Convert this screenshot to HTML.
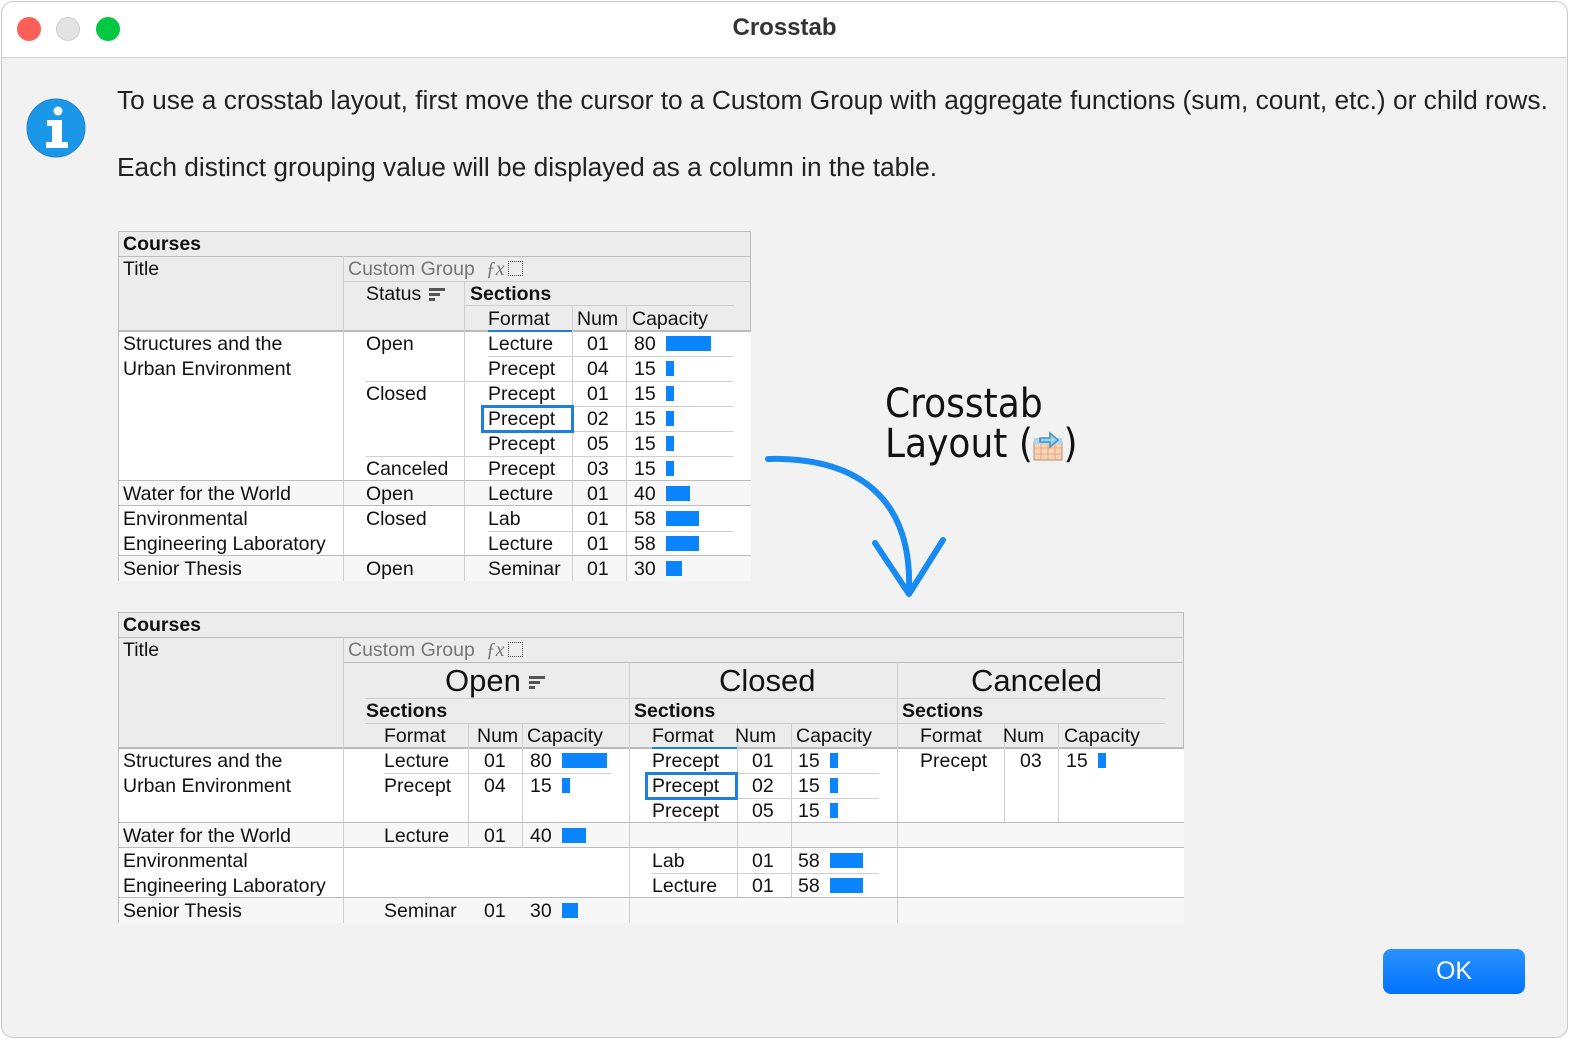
<!DOCTYPE html>
<html><head><meta charset="utf-8">
<style>
html,body{margin:0;padding:0;width:1584px;height:1048px;background:#fff;overflow:hidden}
#win{position:absolute;left:1px;top:1px;width:1565px;height:1035px;border:1px solid #c9c9c9;border-radius:12px;background:#f2f2f2;overflow:hidden}
#bar{position:absolute;left:0;top:0;width:100%;height:55px;background:#fff;border-bottom:1px solid #d4d4d4}
.dot{position:absolute;top:15px;width:24px;height:24px;border-radius:50%}
.a{position:absolute;white-space:nowrap}
.t{position:absolute;white-space:nowrap;font:19.5px/25px "Liberation Sans",sans-serif;color:#111;transform-origin:0 0;transform:translateY(1px)}
.b{font-weight:bold}
.g{color:#777}
.bx{position:absolute}
</style></head><body>
<div id="win">
<div id="bar">
<div class="dot" style="left:15px;background:#fe5f57;border:0"></div>
<div class="dot" style="left:54px;background:#e3e3e3;border:1px solid #cfcfcf;width:22px;height:22px"></div>
<div class="dot" style="left:94px;background:#00c843"></div>
<div class="a" style="left:0;width:1565px;text-align:center;top:12px;font:bold 24px 'Liberation Sans',sans-serif;color:#333">Crosstab</div>
</div>
<svg class="a" style="left:24px;top:96px" width="62" height="62"><circle cx="30" cy="30" r="29" fill="#1a97e8" stroke="#2a80c8" stroke-width="1"/><circle cx="32" cy="13" r="4.5" fill="#fff"/><path d="M21 22h15v22h6v6H20v-6h6V28h-5z" fill="#fff"/></svg>
<div class="a" style="left:115px;top:82px;font:26.3px/32px 'Liberation Sans',sans-serif;color:#222">To use a crosstab layout, first move the cursor to a Custom Group with aggregate functions (sum, count, etc.) or child rows.</div>
<div class="a" style="left:115px;top:149px;font:26.3px/32px 'Liberation Sans',sans-serif;color:#222">Each distinct grouping value will be displayed as a column in the table.</div>
<div class="a" style="left:883px;top:382px;font:40px/40px 'DejaVu Sans','Liberation Sans',sans-serif;color:#111;transform:scaleX(.9);transform-origin:0 0">Crosstab<br>Layout (<span style="display:inline-block;width:34px"></span>)</div>
<svg class="a" style="left:1030px;top:428px" width="32" height="32"><rect x="2" y="12" width="28" height="18" fill="#f6d6a6" stroke="#b88" stroke-width="1"/><path d="M2 18h28M2 24h28M9 12v18M16 12v18M23 12v18" stroke="#d9a" stroke-width=".8"/><rect x="2" y="8" width="28" height="6" fill="#a8d8f5"/><path d="M8 8h10v-5l8 7-8 7v-5H8z" fill="#9cd3f3" stroke="#4d8fb8" stroke-width="1.5"/></svg>
<svg class="a" style="left:0;top:0" width="1565" height="1035"><path d="M766 457C860 455 910 500 907 588" fill="none" stroke="#178bf2" stroke-width="6" stroke-linecap="round"/><path d="M873 541L907 592L941 538" fill="none" stroke="#178bf2" stroke-width="6" stroke-linecap="round" stroke-linejoin="round"/></svg>
<div class="a" style="left:1381px;top:947px;width:142px;height:45px;border-radius:8px;background:linear-gradient(#2b92ff,#0272fb);color:#fff;font:25px/45px 'Liberation Sans',sans-serif;text-align:center">OK</div>
<div id="tb"></div>
</div>
<script>
var W=document.getElementById('tb'),o=1;
function r(x,y,w,h,c){var d=document.createElement('div');d.className='bx';d.style.cssText='left:'+(x-o)+'px;top:'+(y-o)+'px;width:'+w+'px;height:'+h+'px;background:'+c;W.appendChild(d);}
function t(x,y,s,cl,fs){var d=document.createElement('div');d.className='t '+(cl||'');d.style.left=(x-o)+'px';d.style.top=(y-o)+'px';if(fs){d.style.fontSize=fs+'px';d.style.lineHeight='36px';}d.innerHTML=s;W.appendChild(d);}
function h(x,y,w,c){r(x,y,w,1,c||'#cfcfcf');}
function v(x,y,hh,c){r(x,y,1,hh,c||'#cfcfcf');}
function bar(x,y,w){r(x,y+5,w,15,'#0a84ff');}
function sort(x,y){r(x,y+7,16,3,'#555');r(x,y+12,11,3,'#555');r(x,y+17,6,3,'#555');}
function fx(x,y){t(x,y,'<i style="font-family:Liberation Serif">ƒx</i>','g');var d=document.createElement('div');d.className='bx';d.style.cssText='left:'+(x+22-o)+'px;top:'+(y+5-o)+'px;width:13px;height:13px;border:1.5px dotted #555';W.appendChild(d);}
// ---- top table
r(117,230,633,100,'#ececec');r(117,330,633,250,'#fff');r(117,480,633,25,'#f7f7f7');r(117,555,633,25,'#f7f7f7');
h(117,230,633,'#bdbdbd');h(117,255,633,'#bdbdbd');h(342,280,408);h(463,304,270);h(117,329,633,'#bbb');h(117,330,633,'#bbb');
v(117,230,350,'#bdbdbd');v(749,230,100,'#bdbdbd');v(342,255,325);v(463,280,300);v(571,305,275);v(625,305,275);
h(487,329,84,'#1f7fe0');h(487,330,84,'#1f7fe0');
h(487,355,245);h(365,380,367);h(487,405,245);h(487,430,245);h(365,455,367);
h(117,479,633,'#bbb');h(117,504,633,'#bbb');h(487,530,245);h(117,554,633,'#bbb');
t(122,230,'Courses','b');t(122,255,'Title');t(347,255,'Custom Group','g');fx(485,255);
t(365,280,'Status');sort(428,280);t(469,280,'Sections','b');
t(487,305,'Format');t(576,305,'Num');t(631,305,'Capacity');
var rows=[[330,'Lecture','01','80',45],[355,'Precept','04','15',8],[380,'Precept','01','15',8],[405,'Precept','02','15',8],[430,'Precept','05','15',8],[455,'Precept','03','15',8],[480,'Lecture','01','40',24],[505,'Lab','01','58',33],[530,'Lecture','01','58',33],[555,'Seminar','01','30',16]];
rows.forEach(function(a){t(487,a[0],a[1]);t(586,a[0],a[2]);t(633,a[0],a[3]);bar(665,a[0],a[4]);});
t(365,330,'Open');t(365,380,'Closed');t(365,455,'Canceled');t(365,480,'Open');t(365,505,'Closed');t(365,555,'Open');
t(122,330,'Structures and the');t(122,355,'Urban Environment');t(122,480,'Water for the World');t(122,505,'Environmental');t(122,530,'Engineering Laboratory');t(122,555,'Senior Thesis');
var bxx=document.createElement('div');bxx.className='bx';bxx.style.cssText='left:'+(480-o)+'px;top:'+(404-o)+'px;width:87px;height:22px;border:3px solid #1f7fe0';W.appendChild(bxx);
// ---- bottom table
r(117,611,1066,136,'#ececec');r(117,747,1066,175,'#fff');r(117,822,1066,25,'#f7f7f7');r(117,897,1066,25,'#f7f7f7');
h(117,611,1066,'#bdbdbd');h(117,636,1066,'#bdbdbd');h(342,661,841,'#bdbdbd');
h(364,697,800);h(364,722,800);h(117,746,1066,'#bbb');h(117,747,1066,'#bbb');
v(117,611,311,'#bdbdbd');v(1182,611,136,'#bdbdbd');v(342,636,286);v(628,661,261);v(896,661,261);
v(467,722,125);v(521,722,125);v(736,722,175);v(790,722,175);v(1003,722,100);v(1057,722,100);
h(651,746,85,'#1f7fe0');h(651,747,85,'#1f7fe0');
h(383,772,227);h(651,772,227);h(651,797,227);h(117,821,1066,'#bbb');h(117,846,1066,'#bbb');h(651,872,227);h(117,896,1066,'#bbb');
t(122,611,'Courses','b');t(122,636,'Title');t(347,636,'Custom Group','g');fx(485,636);
t(444,661,'Open','',31);sort(528,668);t(718,661,'Closed','',31);t(970,661,'Canceled','',31);
[[365,383,483,528],[633,651,741,797],[901,919,1009,1065]].forEach(function(c){t(c[0],697,'Sections','b');t(c[1],722,'Format');t(c[2]-7,722,'Num');t(c[3]-2,722,'Capacity');});
function row(c,y,f,n,cp,w){t(c[0],y,f);t(c[1],y,n);t(c[2],y,cp);bar(c[3],y,w);}
var O=[383,483,529,561],C=[651,751,797,829],K=[919,1019,1065,1097];
row(O,747,'Lecture','01','80',45);row(O,772,'Precept','04','15',8);row(O,822,'Lecture','01','40',24);row(O,897,'Seminar','01','30',16);
row(C,747,'Precept','01','15',8);row(C,772,'Precept','02','15',8);row(C,797,'Precept','05','15',8);row(C,847,'Lab','01','58',33);row(C,872,'Lecture','01','58',33);
row(K,747,'Precept','03','15',8);
t(122,747,'Structures and the');t(122,772,'Urban Environment');t(122,822,'Water for the World');t(122,847,'Environmental');t(122,872,'Engineering Laboratory');t(122,897,'Senior Thesis');
var b2=document.createElement('div');b2.className='bx';b2.style.cssText='left:'+(644-o)+'px;top:'+(771-o)+'px;width:87px;height:22px;border:3px solid #1f7fe0';W.appendChild(b2);
</script>
</body></html>
